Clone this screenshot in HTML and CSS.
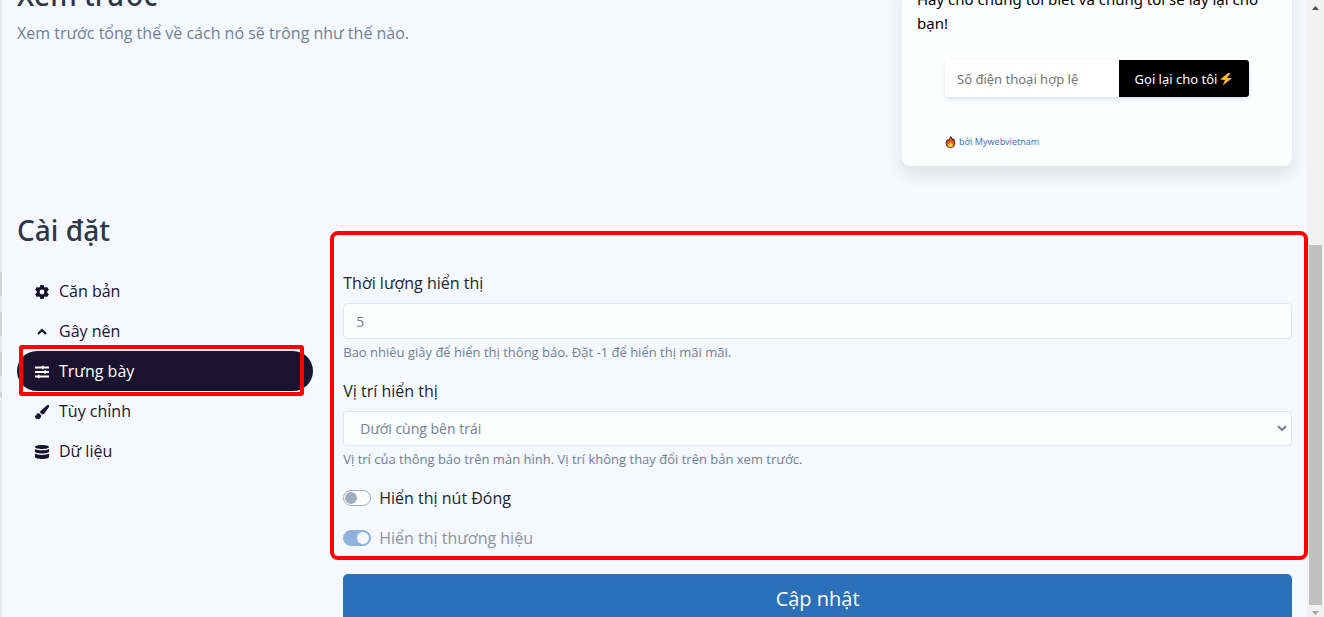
FILE: index.html
```html
<!DOCTYPE html>
<html lang="vi">
<head>
<meta charset="utf-8">
<title>Cài đặt thông báo</title>
<link rel="stylesheet" href="styles.css">
</head>
<body>
<div class="window">
  <div class="edge"><i></i><i></i><i></i><i class="edge-short"></i></div>
  <main class="content">
    <section class="preview">
      <div>
        <h2>Xem trước</h2>
        <p class="muted">Xem trước tổng thể về cách nó sẽ trông như thế nào.</p>
      </div>
      <div class="card">
        <p class="card-text">Hãy cho chúng tôi biết và chúng tôi sẽ lấy lại cho bạn!</p>
        <form class="callback">
          <input class="phone" type="tel" aria-label="Số điện thoại hợp lệ" placeholder="Số điện thoại hợp lệ">
          <button class="call" type="button">Gọi lại cho tôi<svg width="14" height="14" viewBox="0 0 14 14" aria-hidden="true"><path d="M9 1 1 7.600l5 .3L3.600 13.500 13 6.200l-5-.4L11.600 1.200z" fill="#fdb92e"/></svg></button>
        </form>
        <a class="brand" href="#"><svg width="11" height="12" viewBox="0 0 11 12" aria-hidden="true"><path d="M5.500 0C7 1 7.300 2 8 3.200l.7-1C10 4 10.500 5.600 10.300 7.800 10 10.500 8 12 5.500 12S.8 10.500.7 7.800C.6 5.700 1.500 4.600 2.300 3l.8 1.200C3.800 3 5 2 5.500 0z" fill="#40251d"/><path d="M5.500 1.200c1 1.800 1.600 2.800 2.300 4l.9-1.400c1 2 1 3.700.5 5C8.600 10.600 7.300 11.400 5.500 11.400S2.300 10.600 1.700 9C1.200 7.300 1.700 6 2.400 4.500l.8 1.300C4.300 4.500 5.300 3 5.500 1.200z" fill="#ee5a15"/><path d="M5.600 5.500c.5 1.500 1.200 2 2 2.800.5 1.700-.4 3-2.100 3S3 10.200 3.300 8.600C4 8 5.200 7 5.600 5.500z" fill="#ffd33b"/></svg>bởi Mywebvietnam</a>
      </div>
    </section>

    <h2 class="settings-title">Cài đặt</h2>
    <section class="settings">
      <nav class="menu">
        <a href="#"><svg viewBox="0 0 16 16" aria-hidden="true"><path fill-rule="evenodd" d="M6.300 1h3.400l.4 2 1.100.6 2-.7 1.700 2.900-1.600 1.400v1.600l1.600 1.400-1.700 2.900-2-.7-1.100.6-.4 2H6.300l-.4-2-1.100-.6-2 .7-1.700-2.900 1.600-1.400V7.200L1.100 5.800l1.700-2.900 2 .7L5.900 3zM8 5.600a2.400 2.400 0 1 0 0 4.800 2.400 2.400 0 0 0 0-4.800z"/></svg>Căn bản</a>
        <a href="#"><svg viewBox="0 0 16 16" aria-hidden="true"><path d="m4 10 4-4 4 4" fill="none" stroke="currentColor" stroke-width="2.200"/></svg>Gây nên</a>
        <a class="active" href="#"><svg viewBox="0 0 16 16" aria-hidden="true"><path d="M1 3.500h14M1 8h14M1 12.500h14" fill="none" stroke="currentColor" stroke-width="1.800"/><path d="M8 1.700h1.500v3.600H8zM10.500 6.200H12v3.600h-1.500zM4 10.700h1.500v3.600H4z"/></svg>Trưng bày<span class="mark"></span></a>
        <a href="#"><svg viewBox="0 0 16 16" aria-hidden="true"><path d="M14.800 1.200c.6.600.4 1.300 0 2L10.400 9.500c-.6.800-1.500 1.100-2.300 1L6 8.500c0-.8.300-1.500 1-2.100l5.800-5c.7-.6 1.400-.8 2-.2zM5 9.200l2.300 2.200c-.1 2.400-1.600 3.600-3.600 3.600C1.600 15 .8 13.500.8 11.300c1.200.8 1.400.3 1.700-.6C2.900 9.400 3.900 9 5 9.200z"/></svg>Tùy chỉnh</a>
        <a href="#"><svg viewBox="0 0 16 16" aria-hidden="true"><path d="M8 1c3.900 0 7 .9 7 2s-3.100 2-7 2-7-.9-7-2 3.100-2 7-2zM1 5c1.500 1 4 1.300 7 1.300S13.500 6 15 5v2.500c0 1.100-3.100 2-7 2s-7-.9-7-2zM1 9.600c1.500 1 4 1.300 7 1.300s5.500-.3 7-1.300V13c0 1.100-3.100 2-7 2s-7-.9-7-2z"/></svg>Dữ liệu</a>
      </nav>
      <form class="form">
        <div class="fields">
          <div class="field">
            <label for="duration">Thời lượng hiển thị</label>
            <input class="control" id="duration" type="text" value="5">
            <small>Bao nhiêu giây để hiển thị thông báo. Đặt -1 để hiển thị mãi mãi.</small>
          </div>
          <div class="field">
            <label for="position">Vị trí hiển thị</label>
            <div class="select-wrap">
              <select class="control" id="position"><option>Dưới cùng bên trái</option></select>
              <svg class="chevron" width="10" height="7" viewBox="0 0 10 7" aria-hidden="true"><path d="m1 1 4 4 4-4" fill="none" stroke="currentColor" stroke-width="2"/></svg>
            </div>
            <small>Vị trí của thông báo trên màn hình. Vị trí không thay đổi trên bản xem trước.</small>
          </div>
          <label class="switch"><input type="checkbox">Hiển thị nút Đóng</label>
          <label class="switch off"><input type="checkbox" checked disabled>Hiển thị thương hiệu</label>
          <span class="frame"></span>
        </div>
        <button class="submit" type="button">Cập nhật</button>
      </form>
    </section>
  </main>
  <div class="scrollbar" aria-hidden="true">
    <svg width="7" height="4" viewBox="0 0 7 4"><path d="M0 4 3.500 0 7 4z" fill="#505050"/></svg>
    <div class="thumb"></div>
    <svg width="7" height="4" viewBox="0 0 7 4"><path d="M0 0 3.500 4 7 0z" fill="#a3a3a3"/></svg>
  </div>
</div>
</body>
</html>
```

FILE: styles.css
```css
* { box-sizing: border-box; }
body {
  margin: 0;
  background: #f5f8ff;
  color: #212529;
  font: 16px/24px "Open Sans", "Noto Sans", sans-serif;
}
h2, p { margin: 0; }
h2 { color: #2d3748; font: 500 28px/34px "Noto Sans", "Open Sans", sans-serif; }
a { text-decoration: none; }
input, select, button { font-family: inherit; }

.window { display: flex; height: 100vh; overflow: hidden; }
.edge {
  flex: 0 0 2px;
  display: flex;
  flex-direction: column;
  gap: 16px;
  padding-top: 272px;
  background: #ebebeb;
}
.edge i { height: 24px; background: #d3d3d3; }
.edge .edge-short { height: 5px; }

.content { flex: 1; min-width: 0; margin-top: -22px; padding: 0 15px; }
.preview { display: grid; grid-template-columns: 1fr 390px; }
.preview .muted { margin-top: 9px; color: #718096; }
.card {
  padding: 9px 15px 14px;
  border-radius: 8px;
  background: #fdfeff;
  box-shadow: 0 8px 16px rgba(0, 0, 0, .1);
  font-family: "Noto Sans", "Open Sans", sans-serif;
}
.card-text { color: #000; font-size: 15px; }
.callback {
  display: flex;
  height: 37px;
  margin: 25px 28px 35px;
  border-radius: 3px;
  box-shadow: 0 2px 5px rgba(0, 0, 0, .12);
}
.phone {
  flex: 1;
  min-width: 0;
  padding: 0 12px;
  border: 0;
  border-radius: 3px 0 0 3px;
  background: #fff;
  font-size: 13px;
}
.phone::placeholder { color: #757575; }
.call {
  display: flex;
  flex: 0 0 130px;
  align-items: center;
  justify-content: center;
  gap: 2px;
  padding: 0;
  border: 0;
  border-radius: 0 3px 3px 0;
  background: #000;
  color: #fff;
  font-size: 13px;
}
.brand {
  display: flex;
  align-items: center;
  gap: 3px;
  margin-left: 28px;
  color: #3f78bd;
  font-size: 9px;
  line-height: 20px;
}

.settings-title { margin: 47px 0 24px; }
.settings { display: grid; grid-template-columns: repeat(4, 1fr); gap: 30px; }
.menu a {
  position: relative;
  display: flex;
  align-items: center;
  gap: 9px;
  height: 40px;
  padding-left: 17px;
  border-radius: 20px;
  color: #1a132f;
}
.menu svg { width: 16px; height: 16px; margin-top: 2px; fill: currentColor; }
.menu .active { background: #1a132f; color: #fff; }
.mark {
  position: absolute;
  inset: -6px 9px -5px 2px;
  border: 4px solid #f00;
  border-radius: 3px;
}

.form { grid-column: span 3; }
.fields { position: relative; }
.field { display: flex; flex-direction: column; margin-bottom: 17px; }
.field > label { margin-bottom: 8px; }
.field small { margin-top: 4px; color: #718096; font-size: 13px; line-height: 19px; }
.control {
  width: 100%;
  height: 36px;
  padding: 0 12px;
  border: 1px solid #dee7f0;
  border-radius: 4px;
  background: #fdfeff;
  color: #718096;
  font-size: 14px;
}
.select-wrap { position: relative; display: flex; }
.select-wrap .control { height: 35px; padding: 0 16px; appearance: none; }
.chevron { position: absolute; right: 5px; top: 14px; color: #718096; pointer-events: none; }
.switch { display: flex; align-items: center; gap: 8px; margin-bottom: 16px; }
.switch input {
  display: flex;
  align-items: center;
  width: 28px;
  height: 16px;
  margin: 0;
  padding: 0 1px;
  border: 1px solid #a0aec0;
  border-radius: 8px;
  background: #fff;
  appearance: none;
}
.switch input::before { content: ""; width: 12px; height: 12px; border-radius: 50%; background: #a0aec0; }
.switch input:checked { justify-content: flex-end; border-color: #8fb3dc; background: #8fb3dc; }
.switch input:checked::before { background: #f5f8ff; }
.off { color: #8c939e; }
.frame {
  position: absolute;
  inset: -40px -16px -10px -13px;
  border: 4px solid #f00;
  border-radius: 8px;
  pointer-events: none;
}
.submit {
  width: 100%;
  height: 48px;
  margin-top: 8px;
  border: 0;
  border-radius: 5px;
  background: #2b70b8;
  color: #fff;
  font-size: 20px;
}

.scrollbar {
  flex: 0 0 17px;
  display: flex;
  flex-direction: column;
  align-items: center;
  justify-content: space-between;
  padding: 6px 0 2px;
  background: #f1f1f1;
}
.thumb { width: 13px; height: 360px; margin: auto 0 6px; background: #c1c1c1; }
```
